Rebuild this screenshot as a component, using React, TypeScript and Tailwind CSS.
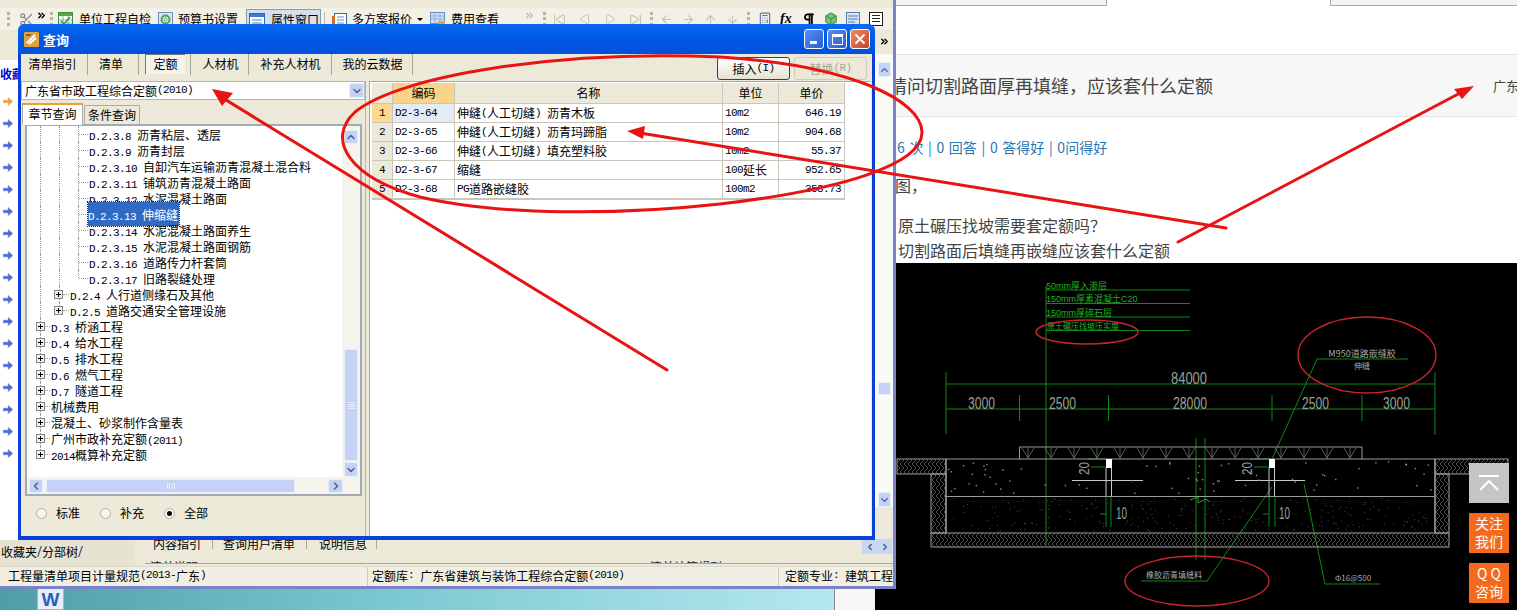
import React from "react";
import { Scissors, ChevronsRight, ChevronUp, ChevronDown, ChevronLeft, ChevronRight, SkipBack, SkipForward, Play, ArrowLeft, ArrowRight, ArrowUp, ArrowDown, Calculator, Pilcrow, Box } from "lucide-react";

function S({ t }: { t: string }) {
  const parts = t.split(/([\x00-\x7f]+)/).filter(Boolean);
  return (
    <>
      {parts.map((p, i) =>
        /^[\x00-\x7f]+$/.test(p) ? (
          <span key={i} className="font-['Liberation_Mono',monospace] text-[11px] tracking-[-0.6px] whitespace-pre">{p}</span>
        ) : (
          <span key={i} className="font-['Noto_Sans_CJK_SC',sans-serif] text-[12px] whitespace-pre">{p}</span>
        )
      )}
    </>
  );
}

function Grip() {
  return <div className="w-[3px] h-[14px] shrink-0 border-l-[3px] border-dotted border-[#b5b2a2]" />;
}

function TbIcon({ kind }: { kind: number }) {
  if (kind === 0)
    return (
      <svg width="15" height="15" viewBox="0 0 15 15" className="shrink-0"><rect x="0.5" y="0.5" width="14" height="14" fill="#fff" stroke="#3f8f3f" /><rect x="1" y="1" width="13" height="3" fill="#57a83f" /><path d="M1 8h13M1 11h13M5 4v10M10 4v10" stroke="#8aa" /><path d="M3 9l3 3 6-7" stroke="#2e9b2e" strokeWidth="1.5" fill="none" /></svg>
    );
  if (kind === 1)
    return (
      <svg width="15" height="15" viewBox="0 0 15 15" className="shrink-0"><rect x="0.5" y="0.5" width="14" height="14" fill="#d6e4f5" stroke="#6d8fc0" /><circle cx="7.5" cy="7.5" r="4" fill="none" stroke="#5aa05a" strokeWidth="2" /><circle cx="7.5" cy="7.5" r="1.3" fill="#fff" stroke="#5aa05a" /></svg>
    );
  if (kind === 2)
    return (
      <svg width="16" height="15" viewBox="0 0 16 15" className="shrink-0"><rect x="0.5" y="0.5" width="15" height="14" fill="#fff" stroke="#2c67b7" /><rect x="1" y="1" width="14" height="3" fill="#3d7cd0" /><path d="M3 7h10M3 10h10M3 13h10" stroke="#5a7fb0" /></svg>
    );
  if (kind === 3)
    return (
      <svg width="15" height="15" viewBox="0 0 15 15" className="shrink-0"><rect x="2.5" y="1.5" width="12" height="13" fill="#fff" stroke="#3a66ad" /><path d="M5 5h7M5 8h7M5 11h7" stroke="#6c8cc2" /><rect x="0" y="4" width="3" height="10" fill="#d96c2a" /></svg>
    );
  return (
    <svg width="15" height="15" viewBox="0 0 15 15" className="shrink-0"><rect x="0.5" y="0.5" width="14" height="11" fill="#cfe1f6" stroke="#6d8fc0" /><path d="M1 4h13M1 7h13M5 1v10M10 1v10" stroke="#8fb0da" /><rect x="8" y="9" width="7" height="5" fill="#e8a33a" /></svg>
  );
}

function Toolbar() {
  return (
    <div className="h-[22px] mt-2 bg-[#f3f1e5] flex items-center text-[12px] text-black shrink-0">
      <div className="w-[7px]" />
      <Grip />
      <Scissors size={15} className="ml-[9px] text-[#8a8a8a]" />
      <ChevronsRight size={11} className="ml-[2px] -mt-2 text-black" strokeWidth={3} />
      <div className="ml-[3px]"><Grip /></div>
      <div className="ml-[5px]"><TbIcon kind={0} /></div>
      <span className="ml-[6px] w-[73px] whitespace-pre"><S t="单位工程自检" /></span>
      <div className="ml-[6px]"><TbIcon kind={1} /></div>
      <span className="ml-[5px] w-[60px] whitespace-pre"><S t="预算书设置" /></span>
      <div className="ml-[8px] mt-px w-[75px] h-[21px] bg-[#d5e0ee] border border-b-0 border-[#7f9db9] flex items-center pl-[2px]">
        <TbIcon kind={2} />
        <span className="ml-[6px] whitespace-pre"><S t="属性窗口" /></span>
      </div>
      <div className="ml-[3px] w-px h-[14px] bg-[#c0bca8]" />
      <div className="ml-[7px]"><TbIcon kind={3} /></div>
      <span className="ml-[5px] w-[60px] whitespace-pre"><S t="多方案报价" /></span>
      <span className="ml-[5px] border-x-[3px] border-t-[3px] border-x-transparent border-t-black" />
      <div className="ml-[7px]"><TbIcon kind={4} /></div>
      <span className="ml-[6px] w-[48px] whitespace-pre"><S t="费用查看" /></span>
      <ChevronsRight size={11} className="ml-[25px] -mt-2 text-[#888]" strokeWidth={2} />
      <div className="ml-[8px]"><Grip /></div>
      <div className="ml-[7px] flex items-center gap-[13px] text-[#c4c2b4]">
        <SkipBack size={13} /><Play size={12} className="rotate-180" /><Play size={12} /><SkipForward size={13} />
      </div>
      <div className="ml-[8px]"><Grip /></div>
      <div className="ml-[7px] flex items-center gap-[9px] text-[#c4c2b4]">
        <ArrowLeft size={13} /><ArrowRight size={13} /><ArrowUp size={13} /><ArrowDown size={13} />
      </div>
      <div className="ml-[8px]"><Grip /></div>
      <div className="ml-[8px] flex items-center gap-[8px]">
        <Calculator size={14} className="text-[#5a78b5]" />
        <span className="font-['Liberation_Serif',serif] italic font-bold text-[14px] w-[14px] leading-none">fx</span>
        <Pilcrow size={14} className="text-black" strokeWidth={3} />
        <Box size={14} className="text-[#3f9a3f]" fill="#7cc47c" />
        <svg width="14" height="14" viewBox="0 0 14 14"><rect x="0.5" y="0.5" width="13" height="13" fill="#dbe6f4" stroke="#5a78b5" /><path d="M2 4h10M2 7h10M2 10h7" stroke="#5a78b5" /></svg>
        <svg width="14" height="14" viewBox="0 0 14 14" className="ml-px"><rect x="0.5" y="0.5" width="13" height="13" fill="#fff" stroke="#222" /><path d="M3 3.5h8M3 6.5h8M3 9.5h8" stroke="#222" /></svg>
      </div>
    </div>
  );
}

function SideArrow({ orange }: { orange?: boolean }) {
  return (
    <svg width="10" height="9" viewBox="0 0 10 9">
      <path d="M0 3h5V0l5 4.5L5 9V6H0z" fill={orange ? "#e8a13c" : "#4e68d0"} stroke={orange ? "#f6d9a8" : "#b7c4ee"} strokeWidth="0.6" />
    </svg>
  );
}

function ScrollBtn({ children, className = "" }: { children: React.ReactNode; className?: string }) {
  return (
    <div className={"flex items-center justify-center rounded-[2px] border border-[#e8eefb] bg-[#c3d2f5] text-[#4d6185] shrink-0 " + className}>{children}</div>
  );
}

function AppWindow() {
  const arrows = Array.from({ length: 17 });
  return (
    <div className="absolute left-0 top-0 w-[896px] h-[589px] flex flex-col bg-[#ece9d8] border-r-[3px] border-b-[3px] border-[#7a83c8]">
      <Toolbar />
      <div className="flex-1 flex min-h-0">
        <div className="flex-1 flex min-w-0">
          <div className="w-[18px] flex flex-col bg-white mt-[30px] shrink-0 overflow-hidden">
            <div className="h-[29px] pt-[8px] text-[12px] font-bold text-[#0000c8] whitespace-pre font-['Noto_Sans_CJK_SC',sans-serif] leading-none">收藏夹</div>
            <div className="flex flex-col gap-[13px] pl-[3px] pt-[8px]">
              {arrows.map((_, i) => <SideArrow key={i} orange={i === 0} />)}
            </div>
          </div>
        </div>
        <div className="w-[18px] shrink-0 flex flex-col items-center">
          <ChevronsRight size={11} className="mt-[6px] text-black" strokeWidth={3} />
          <div className="mt-[7px] w-full flex-1 bg-[#fbfbf6] flex flex-col items-center pt-[8px]">
            <ScrollBtn className="w-[13px] h-[15px]"><ChevronUp size={12} strokeWidth={3} /></ScrollBtn>
            <div className="flex-1 w-[13px] pt-[305px]"><div className="h-[13px] bg-[#c3d2f5] border border-[#e8eefb] rounded-[2px]" /></div>
            <ScrollBtn className="w-[13px] h-[15px]"><ChevronDown size={12} strokeWidth={3} /></ScrollBtn>
            <div className="h-[33px] w-full bg-[#ece9d8]" />
          </div>
        </div>
      </div>
      <div className="h-[26px] shrink-0 flex text-black relative">
        <div className="w-[135px] h-full flex items-center pl-px pb-[3px] bg-[#e6e3d3]"><S t="收藏夹" /><span className="text-[14px] font-light">/</span><S t="分部树" /><span className="text-[14px] font-light">/</span></div>
        <div className="flex-1 flex items-start pl-[18px] -mt-[5px] relative overflow-hidden">
          <div className="w-[59px] text-left leading-4"><S t="内容指引" /></div>
          <div className="w-px h-[14px] bg-[#aca899] mr-[10px]" />
          <div className="w-[83px] leading-4"><S t="查询用户清单" /></div>
          <div className="w-px h-[14px] bg-[#aca899] mr-[12px]" />
          <div className="w-[57px] leading-4"><S t="说明信息" /></div>
          <div className="w-px h-[14px] bg-[#aca899]" />
          <div className="absolute left-[15px] top-[23px] h-[5px] overflow-hidden leading-4 text-[#223]"><S t="清单说明" /></div>
          <div className="absolute left-[515px] top-[23px] h-[5px] overflow-hidden leading-4 text-[#223]"><S t="清单计算规则" /></div>
          <div className="absolute left-[10px] right-0 top-[28px] h-px bg-[#aca899]" />
          <div className="absolute right-[1px] top-[4px] flex w-[30px] h-[15px] bg-[#c8d6f4] items-center justify-around text-[#3d5580]">
            <ChevronLeft size={10} strokeWidth={3} /><ChevronRight size={10} strokeWidth={3} />
          </div>
        </div>
      </div>
      <div className="h-[20px] shrink-0 flex items-center bg-[#f1efe3] border-t border-[#dcd9c8] text-black overflow-hidden whitespace-pre">
        <div className="w-[370px] pl-2 h-full flex items-center pb-[2px] border-r border-[#cfccbb]"><S t="工程量清单项目计量规范(2013-广东)" /></div>
        <div className="w-[413px] pl-[4px] h-full flex items-center pb-[2px] border-r border-[#cfccbb]"><S t="定额库: 广东省建筑与装饰工程综合定额(2010)" /></div>
        <div className="pl-[6px] h-full flex items-center pb-[2px]"><S t="定额专业: 建筑工程" /></div>
      </div>
    </div>
  );
}

type Row = { level: number; t: string; sel?: boolean; last?: boolean; plus?: boolean };
const treeRows: Row[] = [
  { level: 2, t: "D.2.3.8 沥青粘层、透层" },
  { level: 2, t: "D.2.3.9 沥青封层" },
  { level: 2, t: "D.2.3.10 自卸汽车运输沥青混凝土混合料" },
  { level: 2, t: "D.2.3.11 铺筑沥青混凝土路面" },
  { level: 2, t: "D.2.3.12 水泥混凝土路面" },
  { level: 2, t: "D.2.3.13 伸缩缝", sel: true },
  { level: 2, t: "D.2.3.14 水泥混凝土路面养生" },
  { level: 2, t: "D.2.3.15 水泥混凝土路面钢筋" },
  { level: 2, t: "D.2.3.16 道路传力杆套筒" },
  { level: 2, t: "D.2.3.17 旧路裂缝处理", last: true },
  { level: 1, t: "D.2.4 人行道侧缘石及其他", plus: true },
  { level: 1, t: "D.2.5 道路交通安全管理设施", plus: true, last: true },
  { level: 0, t: "D.3 桥涵工程", plus: true },
  { level: 0, t: "D.4 给水工程", plus: true },
  { level: 0, t: "D.5 排水工程", plus: true },
  { level: 0, t: "D.6 燃气工程", plus: true },
  { level: 0, t: "D.7 隧道工程", plus: true },
  { level: 0, t: "机械费用", plus: true },
  { level: 0, t: "混凝土、砂浆制作含量表", plus: true },
  { level: 0, t: "广州市政补充定额(2011)", plus: true },
  { level: 0, t: "2014概算补充定额", plus: true, last: true },
];

function Plus() {
  return (
    <span className="relative z-10 w-[9px] h-[9px] shrink-0 border border-[#888] bg-[#f0f0e8] flex items-center justify-center">
      <span className="absolute w-[5px] h-px bg-black" />
      <span className="absolute w-px h-[5px] bg-black" />
    </span>
  );
}

function TreeRow({ r }: { r: Row }) {
  const line = "absolute w-0 border-l border-dotted border-[#999]";
  return (
    <div className="relative h-4 flex items-center whitespace-pre text-black">
      <div className={line + " left-[13px] " + (r.level === 0 && r.last ? "top-0 h-2" : "top-0 h-4")} />
      {r.level >= 1 && <div className={line + " left-[32px] " + (r.level === 1 && r.last ? "top-0 h-2" : "top-0 h-4")} />}
      {r.level === 2 && <div className={line + " left-[51px] " + (r.last ? "top-0 h-2" : "top-0 h-4")} />}
      {r.level === 0 && (
        <>
          <div className="w-[9px]" /><Plus />
          <div className="w-[5px] border-t border-dotted border-[#999]" /><span className="ml-px"><S t={r.t} /></span>
        </>
      )}
      {r.level === 1 && (
        <>
          <div className="w-[27px]" /><Plus />
          <div className="w-[6px] border-t border-dotted border-[#999]" /><span className="ml-px"><S t={r.t} /></span>
        </>
      )}
      {r.level === 2 && (
        <>
          <div className="w-[52px]" />
          <div className="w-[9px] border-t border-dotted border-[#999]" />
          {r.sel ? (
            <span className="bg-[#316ac5] text-white outline-1 outline-dotted outline-[#222] pr-px"><S t={r.t} /></span>
          ) : (
            <span className="ml-px"><S t={r.t} /></span>
          )}
        </>
      )}
    </div>
  );
}

const tabs = [
  { t: "清单指引", c: "w-[67px] pr-[3px]" },
  { t: "清单", c: "w-[51px] pr-[4px]" },
  { t: "定额", c: "w-[52px]", on: true },
  { t: "人材机", c: "w-[58px] pl-[2px]" },
  { t: "补充人材机", c: "w-[83px] pl-px" },
  { t: "我的云数据", c: "w-[81px] pl-px" },
];

const tableRows = [
  ["D2-3-64", "伸缝(人工切缝) 沥青木板", "10m2", "646.19"],
  ["D2-3-65", "伸缝(人工切缝) 沥青玛蹄脂", "10m2", "904.68"],
  ["D2-3-66", "伸缝(人工切缝) 填充塑料胶", "10m2", "55.37"],
  ["D2-3-67", "缩缝", "100延长", "952.65"],
  ["D2-3-68", "PG道路嵌缝胶", "100m2", "358.73"],
];

function Radio({ on, t }: { on?: boolean; t: string }) {
  return (
    <div className="flex items-center gap-[9px]">
      <span className="w-[11px] h-[11px] rounded-full border border-[#b5b2a2] bg-[#f6f5ee] flex items-center justify-center">
        {on && <span className="w-[5px] h-[5px] rounded-full bg-black" />}
      </span>
      <S t={t} />
    </div>
  );
}

function Dialog() {
  return (
    <div className="absolute left-[18px] top-[24px] w-[857px] h-[516px] flex flex-col bg-[#0a3fd8] rounded-t-[7px] px-[3px] pb-[4px] text-black">
      <div className="h-[30px] shrink-0 -mx-[3px] rounded-t-[7px] bg-gradient-to-b from-[#0a6af0] via-[#0058e6] to-[#0350d8] flex items-center pl-[6px] pr-[5px]">
        <svg width="15" height="15" viewBox="0 0 15 15"><rect width="15" height="15" rx="1" fill="#e0a23a" /><path d="M3 11l8-8M5 12l7-6" stroke="#fff" strokeWidth="2" /><path d="M2 3h5" stroke="#7a4a10" strokeWidth="1.5" /></svg>
        <span className="ml-[4px] font-['Noto_Sans_CJK_SC',sans-serif] font-bold text-white text-[13px] leading-none">查询</span>
        <div className="ml-auto flex gap-[3px]">
          <div className="w-5 h-5 rounded-[3px] border border-white bg-gradient-to-br from-[#5a8ef0] to-[#2a5cd0] flex items-end justify-start pl-[5px] pb-[4px]"><div className="w-[7px] h-[3px] bg-white" /></div>
          <div className="w-5 h-5 rounded-[3px] border border-white bg-gradient-to-br from-[#5a8ef0] to-[#2a5cd0] flex items-center justify-center"><div className="w-[11px] h-[11px] border border-t-[3px] border-white" /></div>
          <div className="w-5 h-5 rounded-[3px] border border-white bg-gradient-to-br from-[#ee8a6a] to-[#c8401c] flex items-center justify-center">
            <svg width="12" height="12" viewBox="0 0 12 12"><path d="M1.5 1.5l9 9M10.5 1.5l-9 9" stroke="#fff" strokeWidth="2" /></svg>
          </div>
        </div>
      </div>
      <div className="flex-1 min-h-0 bg-[#ece9d8] flex flex-col">
        <div className="h-[27px] shrink-0 flex relative">
          {tabs.map((tb) => (
            <div key={tb.t} className={"h-[21px] border-r border-[#aca899] " + tb.c + (tb.on ? " pl-[6px]" : " flex items-center justify-center pb-[2px]")}>
              {tb.on ? (
                <div className="w-[40px] h-[20px] pb-[1px] border-l border-t border-l-[#777] border-t-[#777] bg-[#f4f3ec] flex items-center justify-center"><S t={tb.t} /></div>
              ) : (
                <S t={tb.t} />
              )}
            </div>
          ))}
          <div className="absolute left-[696px] top-[3px] w-[73px] h-[23px] rounded-[3px] border border-[#27408b] bg-gradient-to-b from-white to-[#e5e2d2] flex items-center justify-center whitespace-pre"><S t="插入(I)" /></div>
          <div className="absolute left-[773px] top-[3px] w-[73px] h-[23px] rounded-[3px] border border-[#cfccba] bg-[#ece9d8] flex items-center justify-center text-[#a9a694] whitespace-pre"><S t="替换(R)" /></div>
        </div>
        <div className="flex-1 min-h-0 flex">
          <div className="w-[345px] shrink-0 flex flex-col border-r border-[#b8b5a4]">
            <div className="h-[19px] shrink-0 bg-white border border-[#a9b7c9] flex items-center pl-[3px] whitespace-pre">
              <S t="广东省市政工程综合定额(2010)" />
              <div className="ml-auto"><ScrollBtn className="w-[15px] h-[15px]"><ChevronDown size={12} strokeWidth={3} /></ScrollBtn></div>
            </div>
            <div className="h-[24px] shrink-0 flex items-end pl-px">
              <div className="w-[61px] h-[22px] pb-[2px] bg-white border-t-2 border-x border-t-[#e6a33a] border-x-[#aaa] flex items-center justify-center z-10 -mb-px"><S t="章节查询" /></div>
              <div className="w-[56px] h-[19px] pb-px ml-px bg-[#ece9d8] border border-[#aaa] border-b-0 flex items-center justify-center"><S t="条件查询" /></div>
            </div>
            <div className="flex-1 min-h-0 flex flex-col">
              <div className="h-[372px] ml-[4px] mr-[3px] border-2 border-[#a3aab3] bg-white relative flex flex-col">
                <div className="flex-1 min-h-0 flex">
                  <div className="flex-1 min-w-0 overflow-hidden">
                    {treeRows.map((r) => <TreeRow key={r.t} r={r} />)}
                  </div>
                  <div className="w-[18px] shrink-0 bg-[#f5f4ec] flex flex-col items-center pt-[4px]">
                    <ScrollBtn className="w-[14px] h-[14px]"><ChevronUp size={12} strokeWidth={3} /></ScrollBtn>
                    <div className="flex-1 flex flex-col justify-end w-[14px]">
                      <div className="h-[112px] bg-[#c3d2f5] border border-[#e8eefb] rounded-[2px] flex items-center justify-center"><div className="w-[7px] h-[7px] border-y-[3px] border-double border-[#e8eefb]" /></div>
                    </div>
                    <ScrollBtn className="w-[14px] h-[15px] mt-px"><ChevronDown size={12} strokeWidth={3} /></ScrollBtn>
                  </div>
                </div>
                <div className="h-[17px] shrink-0 bg-[#f5f4ec] flex items-center pl-[2px]">
                  <ScrollBtn className="w-[14px] h-[14px]"><ChevronLeft size={12} strokeWidth={3} /></ScrollBtn>
                  <div className="ml-[3px] w-[249px] h-[14px] bg-[#c3d2f5] border border-[#e8eefb] rounded-[2px] flex items-center justify-center"><div className="w-[8px] h-[6px] border-x-[3px] border-double border-[#e8eefb]" /></div>
                  <ScrollBtn className="ml-[33px] w-[15px] h-[14px]"><ChevronRight size={12} strokeWidth={3} /></ScrollBtn>
                </div>
              </div>
              <div className="flex-1 flex items-center gap-[20px] pl-[15px] pb-[6px]">
                <Radio t="标准" /><Radio t="补充" /><Radio on t="全部" />
              </div>
            </div>
          </div>
          <div className="flex-1 min-w-0 ml-[3px] bg-white border-t border-l border-[#aca899] pl-[2px] pt-px">
            <div className="w-[473px] grid grid-cols-[21px_62px_268px_56px_65px] grid-rows-[21px_repeat(5,19px)] border-b border-r border-[#c9c7bb]">
              <div className="bg-[#ece9d8] border-r border-b border-[#c9c7bb]" />
              <div className="bg-[#f8d48a] border-r border-b border-[#c9c7bb] flex items-center justify-center"><S t="编码" /></div>
              <div className="bg-[#ece9d8] border-r border-b border-[#c9c7bb] flex items-center justify-center"><S t="名称" /></div>
              <div className="bg-[#ece9d8] border-r border-b border-[#c9c7bb] flex items-center justify-center"><S t="单位" /></div>
              <div className="bg-[#ece9d8] border-b border-[#c9c7bb] flex items-center justify-center"><S t="单价" /></div>
              {tableRows.map((row, i) => (
                <React.Fragment key={row[0]}>
                  <div className={"border-r border-b border-[#c9c7bb] flex items-center justify-center " + (i === 0 ? "bg-[#fbd994]" : "bg-[#ece9d8]")}><S t={String(i + 1)} /></div>
                  <div className={"border-r border-b border-[#c9c7bb] flex items-center pl-[2px] whitespace-pre " + (i === 0 ? "bg-[#e3ebf7]" : "")}><S t={row[0]} /></div>
                  <div className="border-r border-b border-[#c9c7bb] flex items-center pl-[2px] whitespace-pre"><S t={row[1]} /></div>
                  <div className="border-r border-b border-[#c9c7bb] flex items-center pl-[2px] whitespace-pre"><S t={row[2]} /></div>
                  <div className="border-b border-[#c9c7bb] flex items-center justify-end pr-[3px]"><S t={row[3]} /></div>
                </React.Fragment>
              ))}
            </div>
          </div>
          <div className="w-[1px] shrink-0" />
        </div>
      </div>
    </div>
  );
}

function Num({ x, y, w, t, size = 16 }: { x: number; y: number; w: number; t: string; size?: number }) {
  return (
    <text x={x} y={y} fontSize={size} textLength={w} lengthAdjust="spacingAndGlyphs">{t}</text>
  );
}

function Cad() {
  const dots: [number, number][] = [];
  let seed = 17;
  const rnd = () => { seed = (seed * 16807) % 2147483647; return seed / 2147483647; };
  for (let i = 0; i < 70; i++) dots.push([948 + rnd() * 484, 461 + rnd() * 33]);
  const fine: [number, number][] = [];
  for (let i = 0; i < 260; i++) fine.push([948 + rnd() * 484, 498 + rnd() * 33]);
  const v: number[] = [];
  for (let x = 1022; x < 1360; x += 23) v.push(x);
  return (
    <svg viewBox="875 263 642 347" className="w-full h-full block bg-black" preserveAspectRatio="none">
      <defs>
        <pattern id="hatch" width="8" height="8" patternUnits="userSpaceOnUse">
          <path d="M0 0l4 4l-4 4M4 0l4 4l-4 4" stroke="#6f6f6f" strokeWidth="0.7" fill="none" />
        </pattern>
      </defs>
      <g stroke="#0d8a12" strokeWidth="1" fill="none">
        <path d="M1046 286V545M1046 290H1190M1046 303.5H1190M1046 317H1190M1046 330.5H1190" />
        <path d="M946 372V434M1435 372V435M946 384H1435" />
        <path d="M946 409H1435M1019.5 395V421M1108.5 395V421M1272 395V421M1362 395V421" />
        <path d="M1408 359H1317L1272 459" />
        <path d="M1272 487L1207 581H1141" />
        <path d="M1304 484L1325 584H1380" />
        <path d="M1091 467H1106M1254 467H1270M1088 459H1106M1250 459H1270" />
        <path d="M1106 496V527M1111 496V527M1269 496V527M1275 496V527" />
        <path d="M1196 438V560M1205 438V560" />
        <path d="M1100 514H1106M1263 514H1269" />
      </g>
      <g fill="#1fb31f" fontSize="9" fontFamily="'Liberation Sans','Noto Sans CJK SC',sans-serif">
        <text x="1046" y="289">50mm厚入渗层</text>
        <text x="1046" y="302">150mm厚素混凝土C20</text>
        <text x="1046" y="316">150mm厚碎石层</text>
        <text x="1047" y="329" fontSize="8">原土碾压找坡压实度</text>
      </g>
      <g fill="#98a198" fontFamily="'Liberation Sans',sans-serif">
        <Num x={1171} y={384} w={36} t="84000" />
        <Num x={968} y={409} w={27} t="3000" />
        <Num x={1049} y={409} w={27} t="2500" />
        <Num x={1173} y={409} w={34} t="28000" />
        <Num x={1302} y={409} w={27} t="2500" />
        <Num x={1383} y={409} w={27} t="3000" />
        <Num x={1116} y={519} w={11} t="10" />
        <Num x={1279} y={519} w={11} t="10" />
        <g transform="rotate(-90 1089 475)"><Num x={1089} y={475} w={13} t="20" size={15} /></g>
        <g transform="rotate(-90 1252 475)"><Num x={1252} y={475} w={13} t="20" size={15} /></g>
      </g>
      <g fill="#a9a9a9" fontSize="9" fontFamily="'Noto Sans CJK SC',sans-serif" textAnchor="middle">
        <text x="1362" y="357">M950道路嵌缝胶</text>
        <text x="1362" y="369" fontSize="8">伸缝</text>
        <text x="1174" y="578" fontSize="8">橡胶沥青填缝料</text>
        <text x="1353" y="581" fontSize="8">Φ16@500</text>
      </g>
      <g stroke="#9c9c9c" strokeWidth="1" fill="none">
        <rect x="897" y="459" width="49" height="15" fill="url(#hatch)" />
        <rect x="1435" y="459" width="73" height="15" fill="url(#hatch)" />
        <rect x="931" y="533" width="518" height="14" fill="url(#hatch)" />
        <rect x="931" y="474" width="15" height="59" fill="url(#hatch)" />
        <rect x="1435" y="474" width="14" height="59" fill="url(#hatch)" />
        <path d="M946 459H1435M946 496.5H1435M946 459V533M1435 459V533" strokeWidth="1.2" />
        <path d="M1019.5 459V447H1362V459" />
        {v.map((x) => <path key={x} d={"M" + x + " 448l6 10l6-10M" + (x + 6) + " 448v10"} stroke="#7f7f7f" strokeWidth="0.7" />)}
        <path d="M1106 468V496M1111.5 468V496M1269 468V496M1274.5 468V496" stroke="#c8c8c8" />
        <path d="M1072 480.5H1143M1235 480.5H1305" stroke="#c8c8c8" />
        <path d="M1190 500l8 -3v6l8-4l4 3" stroke="#1fa81f" />
      </g>
      <rect x="1106" y="459" width="6" height="9" fill="#fff" />
      <rect x="1269" y="459" width="6" height="9" fill="#fff" />
      <g fill="#8f8f8f">
        {dots.map((d, i) => <rect key={i} x={d[0]} y={d[1]} width="1.4" height="1.4" />)}
      </g>
      <g fill="#5c5c5c">
        {fine.map((d, i) => <rect key={i} x={d[0]} y={d[1]} width="0.9" height="0.9" />)}
      </g>
      <g stroke="#c8232c" strokeWidth="1.4" fill="none">
        <ellipse cx="1087" cy="332" rx="51" ry="12" />
        <ellipse cx="1367" cy="355" rx="69" ry="38" />
        <ellipse cx="1197" cy="581" rx="72" ry="25" />
      </g>
    </svg>
  );
}

function WebPage() {
  return (
    <div className="absolute left-[875px] top-0 right-0 h-[610px] bg-white flex flex-col font-['Noto_Sans_CJK_SC',sans-serif]">
      <div className="h-[6px] flex shrink-0">
        <div className="w-[232px] border-r border-b border-[#aaa] bg-[#f4f4f4]" />
        <div className="ml-[223px] flex-1 border-l border-b border-[#aaa] bg-[#f4f4f4]" />
      </div>
      <div className="mt-[48px] h-[63px] shrink-0 bg-[#f7f7f7] border-y border-[#e2e2e2] flex items-center pl-[14px] whitespace-pre">
        <span className="text-[18px] text-[#444]">请问切割路面厚再填缝，应该套什么定额</span>
        <span className="ml-auto mr-0 text-[13px] text-[#444] w-[24px] overflow-hidden">广东省</span>
      </div>
      <div className="pl-[8px] mt-[20px] text-[14px] leading-5 text-[#2b76b2] whitespace-pre [word-spacing:1.5px]">览6 次 | 0 回答 | 0 答得好 | 0问得好</div>
      <div className="pl-[20px] mt-[18px] text-[16px] leading-5 text-[#444]">图，</div>
      <div className="pl-[23px] mt-[20px] text-[16px] leading-5 text-[#444]">原土碾压找坡需要套定额吗？</div>
      <div className="pl-[23px] mt-[5px] text-[16px] leading-5 text-[#444]">切割路面后填缝再嵌缝应该套什么定额</div>
      <div className="h-[347px] shrink-0 mt-auto"><Cad /></div>
    </div>
  );
}

function SideWidgets() {
  return (
    <div className="absolute left-[1469px] top-[463px] w-[40px] flex flex-col gap-[10px] font-['Noto_Sans_CJK_SC',sans-serif] text-[14px] leading-[18px] text-white text-center">
      <div className="h-[40px] bg-[#c5c5c5] flex flex-col items-center justify-center">
        <div className="w-[20px] h-[2px] bg-white mb-[3px]" />
        <svg width="20" height="11" viewBox="0 0 20 11"><path d="M1 10L10 1l9 9" stroke="#fff" strokeWidth="2" fill="none" /></svg>
      </div>
      <div className="h-[40px] pb-[3px] bg-[#f5691c] flex items-center justify-center">关注<br />我们</div>
      <div className="h-[40px] pb-[3px] bg-[#f5691c] flex items-center justify-center">Q Q<br />咨询</div>
    </div>
  );
}

function Desktop() {
  return (
    <div className="absolute left-0 top-[589px] w-[875px] h-[21px] flex">
      <div className="relative w-[834px] h-full bg-gradient-to-r from-[#4e9ea8] via-[#7fcbd3] to-[#b4e8ee]">
        <div className="absolute left-[37px] -top-[1px] w-[27px] h-[22px] bg-[#e8eef8] border border-[#9fb4d8] flex items-center justify-center font-['Liberation_Sans',sans-serif] font-bold text-[19px] leading-none text-[#2a5fb8]">W</div>
      </div>
      <div className="flex-1 h-full bg-[#f6f6f6] border-l border-[#8a8a8a]" />
    </div>
  );
}

function Marks() {
  return (
    <svg className="absolute left-0 top-0 pointer-events-none" width="1517" height="610" viewBox="0 0 1517 610">
      <g stroke="#e81414" strokeWidth="3" fill="none" strokeLinecap="round">
        <path d="M667 370L226 100" />
        <path d="M1226 228L640 133" />
        <path d="M1178 242L1462 92" />
        <path d="M720 57C560 50 400 75 355 112C325 140 350 178 420 197C500 216 620 215 720 204C840 190 923 165 922 132C921 100 850 65 720 57Z" />
      </g>
      <g fill="#e81414">
        <polygon points="212,89 233,93 222,106" />
        <polygon points="627,131 645,126 643,139" />
        <polygon points="1474,86 1454,89 1462,99" />
      </g>
    </svg>
  );
}

export default function App() {
  return (
    <div className="relative w-[1517px] h-[610px] overflow-hidden bg-white">
      <WebPage />
      <Desktop />
      <AppWindow />
      <Dialog />
      <SideWidgets />
      <Marks />
    </div>
  );
}
